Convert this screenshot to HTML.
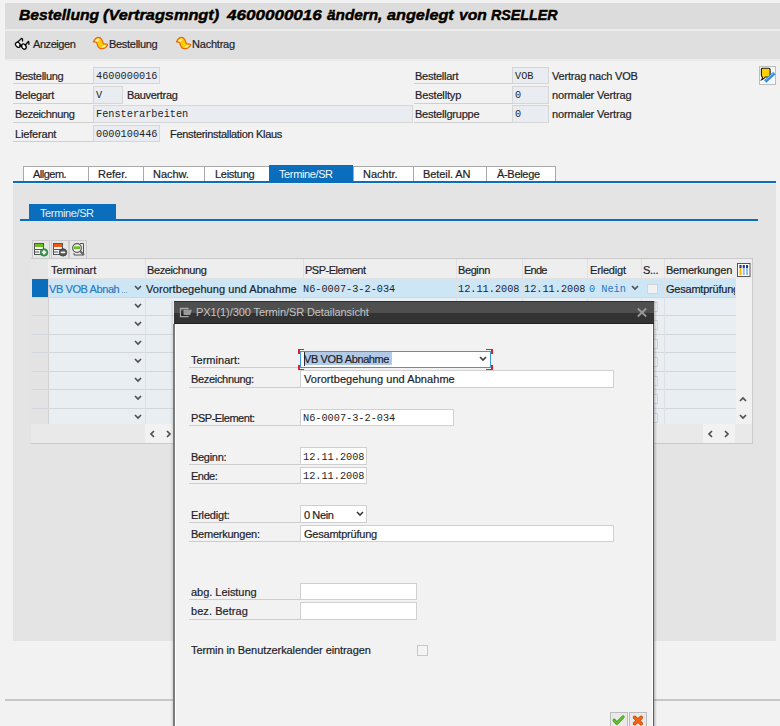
<!DOCTYPE html>
<html><head><meta charset="utf-8"><style>
*{margin:0;padding:0;box-sizing:border-box}
html,body{width:780px;height:726px;overflow:hidden;background:#f2f2f2;font-family:"Liberation Sans",sans-serif;font-size:11px;color:#1e1e28}
.a{position:absolute}
.t{position:absolute;white-space:nowrap;line-height:13px;letter-spacing:-0.3px;-webkit-text-stroke:0.2px currentColor}
.m{position:absolute;white-space:nowrap;line-height:13px;font-family:"Liberation Mono",monospace;font-size:10.25px;letter-spacing:0px;color:#1e1e28}
svg{position:absolute;overflow:visible}
</style></head><body>
<div class="a" style="left:5px;top:3px;width:775px;height:26px;background:#dcdcdc;"></div>
<div class="a" style="left:5px;top:29px;width:775px;height:2px;background:#ececec;"></div>
<div class="a" style="left:5px;top:31px;width:775px;height:28px;background:#dfdfdf;"></div>
<div class="a" style="left:5px;top:59px;width:775px;height:2px;background:#ebebeb;"></div>
<div class="a" style="left:18.90px;top:6px;white-space:nowrap;font-size:15px;line-height:17px;font-weight:bold;font-style:italic;color:#000;-webkit-text-stroke:0.45px #000;transform:scaleX(1.0455);transform-origin:0 0;text-shadow:0 0 1px rgba(255,150,0,.3),0 0 3px rgba(255,255,255,.5)">Bestellung</div>
<div class="a" style="left:103.20px;top:6px;white-space:nowrap;font-size:15px;line-height:17px;font-weight:bold;font-style:italic;color:#000;-webkit-text-stroke:0.45px #000;transform:scaleX(1.0860);transform-origin:0 0;text-shadow:0 0 1px rgba(255,150,0,.3),0 0 3px rgba(255,255,255,.5)">(Vertragsmngt)</div>
<div class="a" style="left:226.64px;top:6px;white-space:nowrap;font-size:15px;line-height:17px;font-weight:bold;font-style:italic;color:#000;-webkit-text-stroke:0.45px #000;transform:scaleX(1.1365);transform-origin:0 0;text-shadow:0 0 1px rgba(255,150,0,.3),0 0 3px rgba(255,255,255,.5)">4600000016</div>
<div class="a" style="left:326.60px;top:6px;white-space:nowrap;font-size:15px;line-height:17px;font-weight:bold;font-style:italic;color:#000;-webkit-text-stroke:0.45px #000;transform:scaleX(1.0222);transform-origin:0 0;text-shadow:0 0 1px rgba(255,150,0,.3),0 0 3px rgba(255,255,255,.5)">ändern,</div>
<div class="a" style="left:387.40px;top:6px;white-space:nowrap;font-size:15px;line-height:17px;font-weight:bold;font-style:italic;color:#000;-webkit-text-stroke:0.45px #000;transform:scaleX(1.0825);transform-origin:0 0;text-shadow:0 0 1px rgba(255,150,0,.3),0 0 3px rgba(255,255,255,.5)">angelegt</div>
<div class="a" style="left:458.90px;top:6px;white-space:nowrap;font-size:15px;line-height:17px;font-weight:bold;font-style:italic;color:#000;-webkit-text-stroke:0.45px #000;transform:scaleX(1.0444);transform-origin:0 0;text-shadow:0 0 1px rgba(255,150,0,.3),0 0 3px rgba(255,255,255,.5)">von</div>
<div class="a" style="left:490.50px;top:6px;white-space:nowrap;font-size:15px;line-height:17px;font-weight:bold;font-style:italic;color:#000;-webkit-text-stroke:0.45px #000;transform:scaleX(0.9514);transform-origin:0 0;text-shadow:0 0 1px rgba(255,150,0,.3),0 0 3px rgba(255,255,255,.5)">RSELLER</div>
<svg style="left:13px;top:34px" width="20" height="18" viewBox="0 0 20 18">
<g fill="#fff" stroke="#000" stroke-width="1.25" stroke-linejoin="round" stroke-linecap="round">
<path d="M4 8.6 L8.5 4.4 Q9.9 4.6 9.5 6.8" fill="none"/>
<path d="M12.5 11 L15.4 7.4 Q16.3 7.8 15.9 10.3" fill="none"/>
<ellipse cx="4.9" cy="10.8" rx="2.1" ry="2.8" transform="rotate(-40 4.9 10.8)"/>
<ellipse cx="10.8" cy="12.6" rx="2.1" ry="2.8" transform="rotate(-40 10.8 12.6)"/>
<path d="M6.9 11.4 L8.7 12.1" stroke-width="1.6"/>
</g></svg>
<div class="t" style="left:33px;top:38px;letter-spacing:-0.429px;">Anzeigen</div>
<svg style="left:90px;top:34px" width="20" height="18" viewBox="0 0 20 18">
<path d="M3.5 8 Q5 3.6 8 3.3 Q10.6 3.3 11.6 5.2 L13.5 9.8 Q16 9.5 17.6 10.6 Q16.4 14.2 13 14.6 L10.4 14.6 Q8.7 14.2 8 12.6 L6.6 8.5 Q5 7.5 3.5 8 Z" fill="#ffcc00" stroke="#e46812" stroke-width="1.2" stroke-linejoin="round"/>
<path d="M5 7.2 Q6.5 4.6 8.4 4.5 Q9.4 4.6 9.6 5.6 L7.6 7.6 Z" fill="#fff2a8"/>
<path d="M11.2 13.4 L14.2 10.9 Q15.6 10.9 16.2 11.4 Q15 13.4 12.8 13.5 Z" fill="#fff2a8"/>
</svg>
<div class="t" style="left:109px;top:38px;letter-spacing:-0.300px;">Bestellung</div>
<svg style="left:173px;top:34px" width="20" height="18" viewBox="0 0 20 18">
<path d="M3.5 8 Q5 3.6 8 3.3 Q10.6 3.3 11.6 5.2 L13.5 9.8 Q16 9.5 17.6 10.6 Q16.4 14.2 13 14.6 L10.4 14.6 Q8.7 14.2 8 12.6 L6.6 8.5 Q5 7.5 3.5 8 Z" fill="#ffcc00" stroke="#e46812" stroke-width="1.2" stroke-linejoin="round"/>
<path d="M5 7.2 Q6.5 4.6 8.4 4.5 Q9.4 4.6 9.6 5.6 L7.6 7.6 Z" fill="#fff2a8"/>
<path d="M11.2 13.4 L14.2 10.9 Q15.6 10.9 16.2 11.4 Q15 13.4 12.8 13.5 Z" fill="#fff2a8"/>
</svg>
<div class="t" style="left:192px;top:38px;letter-spacing:-0.214px;">Nachtrag</div>
<div class="a" style="left:13px;top:83px;width:80px;height:1px;background:#cfcfcf;"></div>
<div class="t" style="left:15px;top:70px;letter-spacing:-0.300px;">Bestellung</div>
<div class="a" style="left:13px;top:103px;width:80px;height:1px;background:#cfcfcf;"></div>
<div class="t" style="left:15px;top:89px;letter-spacing:-0.243px;">Belegart</div>
<div class="a" style="left:13px;top:122px;width:80px;height:1px;background:#cfcfcf;"></div>
<div class="t" style="left:15px;top:108px;letter-spacing:-0.380px;">Bezeichnung</div>
<div class="a" style="left:13px;top:141px;width:80px;height:1px;background:#cfcfcf;"></div>
<div class="t" style="left:15px;top:128px;letter-spacing:-0.175px;">Lieferant</div>
<div class="a" style="left:93px;top:67px;width:67px;height:17px;background:#e9edf1;border:1px solid #d6d6d6"></div>
<div class="m" style="left:96px;top:70px">4600000016</div>
<div class="a" style="left:93px;top:86px;width:30px;height:18px;background:#e9edf1;border:1px solid #d6d6d6"></div>
<div class="m" style="left:96px;top:89px">V</div>
<div class="t" style="left:127px;top:89px;letter-spacing:-0.333px;">Bauvertrag</div>
<div class="a" style="left:93px;top:105px;width:320px;height:18px;background:#e9edf1;border:1px solid #d6d6d6"></div>
<div class="m" style="left:96px;top:108px">Fensterarbeiten</div>
<div class="a" style="left:93px;top:125px;width:67px;height:17px;background:#e9edf1;border:1px solid #d6d6d6"></div>
<div class="m" style="left:96px;top:128px">0000100446</div>
<div class="t" style="left:170px;top:128px;letter-spacing:-0.312px;">Fensterinstallation Klaus</div>
<div class="a" style="left:414px;top:83px;width:98px;height:1px;background:#cfcfcf;"></div>
<div class="t" style="left:415px;top:70px;letter-spacing:-0.267px;">Bestellart</div>
<div class="a" style="left:512px;top:67px;width:37px;height:17px;background:#e9edf1;border:1px solid #d6d6d6"></div>
<div class="m" style="left:515px;top:70px">VOB</div>
<div class="t" style="left:552px;top:70px;letter-spacing:-0.180px;">Vertrag nach VOB</div>
<div class="a" style="left:414px;top:103px;width:98px;height:1px;background:#cfcfcf;"></div>
<div class="t" style="left:415px;top:89px;letter-spacing:-0.156px;">Bestelltyp</div>
<div class="a" style="left:512px;top:86px;width:37px;height:18px;background:#e9edf1;border:1px solid #d6d6d6"></div>
<div class="m" style="left:515px;top:89px">0</div>
<div class="t" style="left:552px;top:89px;letter-spacing:-0.160px;">normaler Vertrag</div>
<div class="a" style="left:414px;top:122px;width:98px;height:1px;background:#cfcfcf;"></div>
<div class="t" style="left:415px;top:108px;letter-spacing:-0.225px;">Bestellgruppe</div>
<div class="a" style="left:512px;top:105px;width:37px;height:18px;background:#e9edf1;border:1px solid #d6d6d6"></div>
<div class="m" style="left:515px;top:108px">0</div>
<div class="t" style="left:552px;top:108px;letter-spacing:-0.160px;">normaler Vertrag</div>
<svg style="left:759px;top:66px" width="17" height="19" viewBox="0 0 17 19">
<rect x="0.5" y="0.5" width="16" height="18" fill="#f7f8fa" stroke="#bdbdbd"/>
<path d="M2.4 3.4 Q2.4 2.2 3.6 2.2 L9.9 2.2 Q11.1 2.2 11.1 3.4 L11.1 9.4 Q11.1 10.8 9.6 10.9 L6.4 11 Q4.8 12.9 2.6 13.8 Q3.7 12.2 3.3 10.8 Q2.4 10.4 2.4 9.2 Z" fill="#ffd000" stroke="#1a1a1a" stroke-width="1.1"/>
<path d="M6.2 15.4 L15.4 6.9" stroke="#3a88d8" stroke-width="3.4"/>
<path d="M6.7 14.1 L14.9 6.5" stroke="#a0ccf6" stroke-width="0.9"/>
</svg>
<div class="a" style="left:23px;top:166px;width:66px;height:15px;background:#fff;border:1px solid #a9a9a9;border-bottom:none"></div>
<div class="t" style="left:33px;top:168px;letter-spacing:-0.500px;">Allgem.</div>
<div class="a" style="left:88px;top:166px;width:56px;height:15px;background:#fff;border:1px solid #a9a9a9;border-bottom:none"></div>
<div class="t" style="left:98px;top:168px;letter-spacing:0.000px;">Refer.</div>
<div class="a" style="left:143px;top:166px;width:62px;height:15px;background:#fff;border:1px solid #a9a9a9;border-bottom:none"></div>
<div class="t" style="left:153px;top:168px;letter-spacing:-0.060px;">Nachw.</div>
<div class="a" style="left:204px;top:166px;width:66px;height:15px;background:#fff;border:1px solid #a9a9a9;border-bottom:none"></div>
<div class="t" style="left:215px;top:168px;letter-spacing:-0.286px;">Leistung</div>
<div class="a" style="left:269px;top:165px;width:84px;height:16px;background:#0a6ebd;"></div>
<div class="t" style="left:279px;top:168px;letter-spacing:-0.378px;color:#f4f8fc;-webkit-text-stroke:0">Termine/SR</div>
<div class="a" style="left:353px;top:166px;width:61px;height:15px;background:#fff;border:1px solid #a9a9a9;border-bottom:none"></div>
<div class="t" style="left:363px;top:168px;letter-spacing:-0.067px;">Nachtr.</div>
<div class="a" style="left:413px;top:166px;width:74px;height:15px;background:#fff;border:1px solid #a9a9a9;border-bottom:none"></div>
<div class="t" style="left:423px;top:168px;letter-spacing:-0.089px;">Beteil. AN</div>
<div class="a" style="left:486px;top:166px;width:70px;height:15px;background:#fff;border:1px solid #a9a9a9;border-bottom:none"></div>
<div class="t" style="left:497px;top:168px;letter-spacing:-0.314px;">Ä-Belege</div>
<div class="a" style="left:13px;top:181px;width:763px;height:2px;background:#0a6ebd;"></div>
<div class="a" style="left:13px;top:183px;width:763px;height:1px;background:#eeeeee;"></div>
<div class="a" style="left:13px;top:184px;width:763px;height:457px;background:#e4e4e4;"></div>
<div class="a" style="left:29px;top:204px;width:87px;height:16px;background:#0a6ebd;"></div>
<div class="a" style="left:20px;top:219px;width:738px;height:2px;background:#0a6ebd;"></div>
<div class="t" style="left:40px;top:207px;letter-spacing:-0.378px;color:#e4eef8;-webkit-text-stroke:0">Termine/SR</div>
<div class="a" style="left:32px;top:240px;width:18px;height:19px;border:1px solid #cbcbcb;background:#e6e6e6"></div>
<div class="a" style="left:51px;top:240px;width:18px;height:19px;border:1px solid #cbcbcb;background:#e6e6e6"></div>
<div class="a" style="left:69px;top:240px;width:18px;height:19px;border:1px solid #cbcbcb;background:#e6e6e6"></div>
<svg style="left:34px;top:243px" width="15" height="14" viewBox="0 0 15 14">
<rect x="0.5" y="0.5" width="9" height="11" fill="#f6f6f6" stroke="#555"/>
<rect x="1" y="1" width="8" height="3" fill="#6abf1e"/>
<path d="M1 6.5 H9 M1 9 H5" stroke="#555"/>
<circle cx="10" cy="9.4" r="3.7" fill="#3a9f4c" stroke="#1f7a34" stroke-width="0.9"/>
<path d="M10 7.2 V11.6 M7.8 9.4 H12.2" stroke="#fff" stroke-width="1.6"/>
</svg>
<svg style="left:53px;top:243px" width="15" height="14" viewBox="0 0 15 14">
<rect x="0.5" y="0.5" width="9" height="11" fill="#f6f6f6" stroke="#555"/>
<rect x="1" y="1" width="8" height="3" fill="#f05a16"/>
<path d="M1 6.5 H9 M1 9 H5" stroke="#555"/>
<circle cx="10" cy="9.4" r="3.7" fill="#5a5a5a" stroke="#3a3a3a" stroke-width="0.9"/>
<path d="M7.8 9.4 H12.2" stroke="#fff" stroke-width="1.6"/>
</svg>
<svg style="left:71px;top:242px" width="15" height="15" viewBox="0 0 15 15">
<path d="M9 1.5 H12.5 V13 H3 V11" fill="none" stroke="#555"/>
<circle cx="6" cy="6" r="4.3" fill="#f6f6f6" stroke="#555" stroke-width="1.2"/>
<rect x="3" y="4.3" width="6" height="2.8" fill="#6abf1e"/>
<path d="M9 9 L13 13" stroke="#666" stroke-width="2.2"/>
</svg>
<div class="a" style="left:31px;top:258px;width:722px;height:186px;background:#ededed;border:1px solid #cacaca"></div>
<div class="a" style="left:32px;top:259px;width:704px;height:20px;background:#eeeeee;"></div>
<div class="a" style="left:32px;top:278px;width:704px;height:1px;background:#e2e2e2;"></div>
<div class="a" style="left:31px;top:259px;width:17px;height:20px;background:#e6e6e6;"></div>
<div class="a" style="left:31px;top:279px;width:17px;height:145px;background:#e3e3e3;"></div>
<div class="a" style="left:48px;top:279px;width:1px;height:145px;background:#d2d2d2;"></div>
<div class="a" style="left:49px;top:279px;width:687px;height:18px;background:#cde6f6;"></div>
<div class="a" style="left:32px;top:279px;width:16px;height:18px;background:#0a6ebd;"></div>
<div class="a" style="left:49px;top:297px;width:687px;height:127px;background:#e9eef2;"></div>
<div class="a" style="left:32px;top:297px;width:704px;height:1px;background:#d3d7db;"></div>
<div class="a" style="left:32px;top:315px;width:704px;height:1px;background:#d3d7db;"></div>
<div class="a" style="left:32px;top:334px;width:704px;height:1px;background:#d3d7db;"></div>
<div class="a" style="left:32px;top:352px;width:704px;height:1px;background:#d3d7db;"></div>
<div class="a" style="left:32px;top:371px;width:704px;height:1px;background:#d3d7db;"></div>
<div class="a" style="left:32px;top:389px;width:704px;height:1px;background:#d3d7db;"></div>
<div class="a" style="left:32px;top:408px;width:704px;height:1px;background:#d3d7db;"></div>
<div class="a" style="left:32px;top:424px;width:704px;height:1px;background:#d3d7db;"></div>
<div class="a" style="left:145px;top:259px;width:1px;height:165px;background:#dde1e5;"></div>
<div class="a" style="left:303px;top:259px;width:1px;height:165px;background:#dde1e5;"></div>
<div class="a" style="left:456px;top:259px;width:1px;height:165px;background:#dde1e5;"></div>
<div class="a" style="left:522px;top:259px;width:1px;height:165px;background:#dde1e5;"></div>
<div class="a" style="left:587px;top:259px;width:1px;height:165px;background:#dde1e5;"></div>
<div class="a" style="left:641px;top:259px;width:1px;height:165px;background:#dde1e5;"></div>
<div class="a" style="left:664px;top:259px;width:1px;height:165px;background:#dde1e5;"></div>
<div class="t" style="left:51px;top:264px;letter-spacing:-0.075px;">Terminart</div>
<div class="t" style="left:147px;top:264px;letter-spacing:-0.380px;">Bezeichnung</div>
<div class="t" style="left:305px;top:264px;letter-spacing:-0.500px;">PSP-Element</div>
<div class="t" style="left:458px;top:264px;letter-spacing:-0.400px;">Beginn</div>
<div class="t" style="left:524px;top:264px;letter-spacing:-0.767px;">Ende</div>
<div class="t" style="left:590px;top:264px;letter-spacing:-0.186px;">Erledigt</div>
<div class="t" style="left:643px;top:264px;">S...</div>
<div class="t" style="left:666px;top:264px;letter-spacing:-0.220px;">Bemerkungen</div>
<svg style="left:737px;top:263px" width="14" height="14" viewBox="0 0 14 14">
<rect x="0.5" y="0.5" width="12.5" height="13" fill="#fff" stroke="#555"/>
<rect x="2.5" y="2" width="2" height="10" fill="#ffb400"/><rect x="2.5" y="2" width="2" height="3" fill="#1a3f99"/>
<rect x="5.8" y="2" width="2" height="10" fill="#9bbce6"/><rect x="5.8" y="2" width="2" height="3" fill="#1a3f99"/>
<rect x="9" y="2" width="2" height="10" fill="#9bbce6"/><rect x="9" y="2" width="2" height="3" fill="#1a3f99"/>
</svg>
<div class="a" style="left:736px;top:279px;width:16px;height:145px;background:#f1f1f1;"></div>
<svg style="left:739px;top:397px" width="8" height="5" viewBox="0 0 8 5"><path d="M1 4 L4 1 L7 4" fill="none" stroke="#505050" stroke-width="1.7"/></svg>
<svg style="left:739px;top:414px" width="8" height="5" viewBox="0 0 8 5"><path d="M1 1 L4 4 L7 1" fill="none" stroke="#505050" stroke-width="1.7"/></svg>
<div class="a" style="left:31px;top:424px;width:721px;height:19px;background:#e9e9e9;"></div>
<div class="a" style="left:145px;top:424px;width:34px;height:19px;background:#f2f2f2;"></div>
<div class="a" style="left:703px;top:424px;width:32px;height:19px;background:#f2f2f2;"></div>
<svg style="left:150px;top:430px" width="5" height="8" viewBox="0 0 5 8"><path d="M4 1 L1 4 L4 7" fill="none" stroke="#505050" stroke-width="1.7"/></svg>
<svg style="left:166px;top:430px" width="5" height="8" viewBox="0 0 5 8"><path d="M1 1 L4 4 L1 7" fill="none" stroke="#505050" stroke-width="1.7"/></svg>
<svg style="left:708px;top:430px" width="5" height="8" viewBox="0 0 5 8"><path d="M4 1 L1 4 L4 7" fill="none" stroke="#505050" stroke-width="1.7"/></svg>
<svg style="left:724px;top:430px" width="5" height="8" viewBox="0 0 5 8"><path d="M1 1 L4 4 L1 7" fill="none" stroke="#505050" stroke-width="1.7"/></svg>
<div class="t" style="left:49px;top:283px;letter-spacing:-0.409px;color:#2a7cc4">VB VOB Abnah</div>
<div class="a" style="left:122px;top:292px;width:1px;height:1px;background:#7f9cb2;"></div>
<div class="a" style="left:124px;top:292px;width:1px;height:1px;background:#7f9cb2;"></div>
<div class="a" style="left:126px;top:292px;width:1px;height:1px;background:#7f9cb2;"></div>
<svg style="left:134px;top:285px" width="8" height="5" viewBox="0 0 8 5"><path d="M1 1 L4 4 L7 1" fill="none" stroke="#505050" stroke-width="1.7"/></svg>
<svg style="left:134px;top:303px" width="8" height="5" viewBox="0 0 8 5"><path d="M1 1 L4 4 L7 1" fill="none" stroke="#505050" stroke-width="1.7"/></svg>
<svg style="left:134px;top:321px" width="8" height="5" viewBox="0 0 8 5"><path d="M1 1 L4 4 L7 1" fill="none" stroke="#505050" stroke-width="1.7"/></svg>
<svg style="left:134px;top:340px" width="8" height="5" viewBox="0 0 8 5"><path d="M1 1 L4 4 L7 1" fill="none" stroke="#505050" stroke-width="1.7"/></svg>
<svg style="left:134px;top:358px" width="8" height="5" viewBox="0 0 8 5"><path d="M1 1 L4 4 L7 1" fill="none" stroke="#505050" stroke-width="1.7"/></svg>
<svg style="left:134px;top:377px" width="8" height="5" viewBox="0 0 8 5"><path d="M1 1 L4 4 L7 1" fill="none" stroke="#505050" stroke-width="1.7"/></svg>
<svg style="left:134px;top:395px" width="8" height="5" viewBox="0 0 8 5"><path d="M1 1 L4 4 L7 1" fill="none" stroke="#505050" stroke-width="1.7"/></svg>
<svg style="left:134px;top:414px" width="8" height="5" viewBox="0 0 8 5"><path d="M1 1 L4 4 L7 1" fill="none" stroke="#505050" stroke-width="1.7"/></svg>
<div class="t" style="left:146px;top:283px;letter-spacing:0.060px;">Vorortbegehung und Abnahme</div>
<div class="m" style="left:303px;top:283px">N6-0007-3-2-034</div>
<div class="m" style="left:458px;top:283px">12.11.2008</div>
<div class="m" style="left:524px;top:283px">12.11.2008</div>
<div class="m" style="left:589px;top:283px;color:#2878c0">0 Nein</div>
<svg style="left:631px;top:285px" width="8" height="5" viewBox="0 0 8 5"><path d="M1 1 L4 4 L7 1" fill="none" stroke="#505050" stroke-width="1.7"/></svg>
<div class="t" style="left:666px;top:283px;letter-spacing:-0.217px;width:69px;overflow:hidden">Gesamtprüfung</div>
<div class="a" style="left:647px;top:284px;width:11px;height:10px;border:1px solid #d4d4d4;background:#f1f1f1"></div>
<div class="a" style="left:647px;top:302px;width:11px;height:10px;border:1px solid #d4d4d4;background:#f1f1f1"></div>
<div class="a" style="left:647px;top:320px;width:11px;height:10px;border:1px solid #d4d4d4;background:#f1f1f1"></div>
<div class="a" style="left:647px;top:339px;width:11px;height:10px;border:1px solid #d4d4d4;background:#f1f1f1"></div>
<div class="a" style="left:647px;top:357px;width:11px;height:10px;border:1px solid #d4d4d4;background:#f1f1f1"></div>
<div class="a" style="left:647px;top:376px;width:11px;height:10px;border:1px solid #d4d4d4;background:#f1f1f1"></div>
<div class="a" style="left:647px;top:394px;width:11px;height:10px;border:1px solid #d4d4d4;background:#f1f1f1"></div>
<div class="a" style="left:647px;top:413px;width:11px;height:10px;border:1px solid #d4d4d4;background:#f1f1f1"></div>
<div class="a" style="left:5px;top:699px;width:775px;height:2px;background:#c6c6c6;"></div>
<div class="a" style="left:170px;top:301px;width:3px;height:425px;background:linear-gradient(to right,rgba(0,0,0,0),rgba(0,0,0,.1));"></div>
<div class="a" style="left:654px;top:301px;width:3px;height:425px;background:linear-gradient(to right,rgba(0,0,0,.22),rgba(0,0,0,0));"></div>
<div class="a" style="left:173px;top:324px;width:2px;height:402px;background:#7c7c7c;"></div>
<div class="a" style="left:175px;top:324px;width:1px;height:402px;background:#ffffff;"></div>
<div class="a" style="left:176px;top:324px;width:476px;height:402px;background:#f2f2f2;"></div>
<div class="a" style="left:652px;top:324px;width:1px;height:402px;background:#ffffff;"></div>
<div class="a" style="left:653px;top:324px;width:1px;height:402px;background:#5c5c5c;"></div>
<div class="a" style="left:174px;top:301px;width:480px;height:1px;background:#303030;"></div>
<div class="a" style="left:174px;top:302px;width:480px;height:11px;background:#4f4f4f;"></div>
<div class="a" style="left:174px;top:313px;width:480px;height:10px;background:#333333;"></div>
<div class="a" style="left:174px;top:323px;width:480px;height:1px;background:#222222;"></div>
<svg style="left:176px;top:302px" width="20" height="20" viewBox="0 0 20 20">
<path d="M12.6 6.5 H4.5 V14.6 H12.6" fill="none" stroke="#a8a8a8" stroke-width="1.3"/>
<path d="M7.6 7.8 H16 L14.2 13 H7.6 Z" fill="#9a9a9a"/>
<path d="M6 9 V13.5 H10" fill="none" stroke="#222" stroke-width="1.2"/>
</svg>
<div class="t" style="left:196px;top:306px;letter-spacing:-0.091px;color:#c4c4c4;-webkit-text-stroke:0">PX1(1)/300 Termin/SR Detailansicht</div>
<svg style="left:637px;top:308px" width="10" height="9" viewBox="0 0 10 9"><path d="M0.8 0.5 L9.2 8.5 M9.2 0.5 L0.8 8.5" stroke="#9a9a9a" stroke-width="1.8"/></svg>
<div class="a" style="left:189px;top:367px;width:111px;height:1px;background:#cdcdcd;"></div>
<div class="t" style="left:191px;top:354px;letter-spacing:0.022px;">Terminart:</div>
<div class="a" style="left:189px;top:387px;width:111px;height:1px;background:#cdcdcd;"></div>
<div class="t" style="left:191px;top:373px;letter-spacing:-0.318px;">Bezeichnung:</div>
<div class="a" style="left:189px;top:425px;width:111px;height:1px;background:#cdcdcd;"></div>
<div class="t" style="left:191px;top:412px;letter-spacing:-0.455px;">PSP-Element:</div>
<div class="a" style="left:189px;top:464px;width:111px;height:1px;background:#cdcdcd;"></div>
<div class="t" style="left:191px;top:451px;letter-spacing:-0.300px;">Beginn:</div>
<div class="a" style="left:189px;top:483px;width:111px;height:1px;background:#cdcdcd;"></div>
<div class="t" style="left:191px;top:470px;letter-spacing:-0.500px;">Ende:</div>
<div class="a" style="left:189px;top:522px;width:111px;height:1px;background:#cdcdcd;"></div>
<div class="t" style="left:191px;top:509px;letter-spacing:-0.188px;">Erledigt:</div>
<div class="a" style="left:189px;top:541px;width:111px;height:1px;background:#cdcdcd;"></div>
<div class="t" style="left:191px;top:528px;letter-spacing:-0.236px;">Bemerkungen:</div>
<div class="a" style="left:189px;top:599px;width:111px;height:1px;background:#cdcdcd;"></div>
<div class="t" style="left:191px;top:586px;letter-spacing:-0.033px;">abg. Leistung</div>
<div class="a" style="left:189px;top:619px;width:111px;height:1px;background:#cdcdcd;"></div>
<div class="t" style="left:191px;top:605px;letter-spacing:0.060px;">bez. Betrag</div>
<div class="t" style="left:191px;top:644px;letter-spacing:-0.086px;">Termin in Benutzerkalender eintragen</div>
<div class="a" style="left:417px;top:645px;width:11px;height:11px;border:1px solid #c8c8c8;background:#f4f4f4"></div>
<div class="a" style="left:300px;top:351px;width:191px;height:17px;background:#fff;border:1px solid #3d9ad8"></div>
<div class="a" style="left:304px;top:352px;width:88px;height:13px;background:#b2cae6;"></div>
<div class="a" style="left:304px;top:352px;width:1px;height:14px;background:#2a2a2a;"></div>
<div class="t" style="left:304px;top:353px;letter-spacing:-0.385px;">VB VOB Abnahme</div>
<svg style="left:479px;top:356px" width="8" height="5" viewBox="0 0 8 5"><path d="M1 1 L4 4 L7 1" fill="none" stroke="#404040" stroke-width="1.7"/></svg>
<div class="a" style="left:298px;top:349px;width:6px;height:1px;background:#e8201c;"></div>
<div class="a" style="left:298px;top:349px;width:2px;height:5px;background:#e8201c;"></div>
<div class="a" style="left:298px;top:369px;width:6px;height:1px;background:#e8201c;"></div>
<div class="a" style="left:298px;top:365px;width:2px;height:5px;background:#e8201c;"></div>
<div class="a" style="left:486px;top:349px;width:6px;height:1px;background:#e8201c;"></div>
<div class="a" style="left:491px;top:349px;width:2px;height:5px;background:#e8201c;"></div>
<div class="a" style="left:486px;top:369px;width:6px;height:1px;background:#e8201c;"></div>
<div class="a" style="left:491px;top:365px;width:2px;height:5px;background:#e8201c;"></div>
<div class="a" style="left:300px;top:370px;width:314px;height:18px;background:#fff;border:1px solid #d0d0d0"></div>
<div class="t" style="left:304px;top:373px;letter-spacing:0.060px;">Vorortbegehung und Abnahme</div>
<div class="a" style="left:300px;top:409px;width:154px;height:17px;background:#fff;border:1px solid #d0d0d0"></div>
<div class="m" style="left:303px;top:412px">N6-0007-3-2-034</div>
<div class="a" style="left:300px;top:447px;width:67px;height:18px;background:#fff;border:1px solid #d0d0d0"></div>
<div class="m" style="left:303px;top:451px">12.11.2008</div>
<div class="a" style="left:300px;top:467px;width:67px;height:17px;background:#fff;border:1px solid #d0d0d0"></div>
<div class="m" style="left:303px;top:470px">12.11.2008</div>
<div class="a" style="left:300px;top:505px;width:67px;height:18px;background:#fff;border:1px solid #d0d0d0"></div>
<div class="t" style="left:304px;top:509px;letter-spacing:-0.400px;">0 Nein</div>
<svg style="left:356px;top:511px" width="8" height="5" viewBox="0 0 8 5"><path d="M1 1 L4 4 L7 1" fill="none" stroke="#404040" stroke-width="1.7"/></svg>
<div class="a" style="left:300px;top:525px;width:314px;height:17px;background:#fff;border:1px solid #d0d0d0"></div>
<div class="t" style="left:304px;top:528px;letter-spacing:-0.217px;">Gesamtprüfung</div>
<div class="a" style="left:300px;top:583px;width:117px;height:17px;background:#fff;border:1px solid #d0d0d0"></div>
<div class="a" style="left:300px;top:602px;width:117px;height:18px;background:#fff;border:1px solid #d0d0d0"></div>
<div class="a" style="left:610px;top:712px;width:18px;height:16px;border:1px solid #bcbcbc;background:#e9e9e9"></div>
<div class="a" style="left:629px;top:712px;width:18px;height:16px;border:1px solid #bcbcbc;background:#e9e9e9"></div>
<svg style="left:610px;top:712px" width="18" height="14" viewBox="0 0 18 14"><path d="M4.2 8.2 L6.8 11.3 L13 5" fill="none" stroke="#3f8f1c" stroke-width="3.2" stroke-linecap="round" stroke-linejoin="round"/><path d="M4.2 8.2 L6.8 11.3 L13 5" fill="none" stroke="#66c02c" stroke-width="1.9" stroke-linecap="round" stroke-linejoin="round"/></svg>
<svg style="left:629px;top:712px" width="18" height="14" viewBox="0 0 18 14"><path d="M5.6 5.4 L12.2 11.6 M12.2 5.4 L5.6 11.6" fill="none" stroke="#c84400" stroke-width="3.6" stroke-linecap="round"/><path d="M5.6 5.4 L12.2 11.6 M12.2 5.4 L5.6 11.6" fill="none" stroke="#f86414" stroke-width="2.2" stroke-linecap="round"/></svg>
</body></html>
